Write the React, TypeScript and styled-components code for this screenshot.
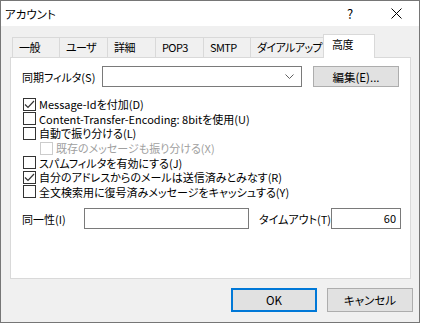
import styled, { createGlobalStyle } from 'styled-components';

const GlobalStyle = createGlobalStyle`
  html, body {
    margin: 0;
    padding: 0;
    background: #ffffff;
  }
  * {
    box-sizing: border-box;
  }
`;

const Window = styled.div`
  width: 420px;
  height: 323px;
  border: 1px solid #767676;
  background: #f0f0f0;
  display: flex;
  flex-direction: column;
  font-family: "Noto Sans CJK JP", "Noto Sans", sans-serif;
  font-feature-settings: "palt";
  font-size: 11px;
  line-height: 14px;
  color: #000;
`;

const TitleBar = styled.div`
  height: 25px;
  background: #fff;
  display: flex;
  align-items: center;
  padding-left: 4px;
`;

const Title = styled.div`
  flex: 1;
  font-size: 11.5px;
`;

const TitleButton = styled.div`
  width: 46px;
  height: 25px;
  display: flex;
  align-items: center;
  justify-content: center;
  font-size: 13px;
`;

const Body = styled.div`
  flex: 1;
  display: flex;
  flex-direction: column;
  padding: 8px 6px 0 9px;
`;

const TabStrip = styled.div`
  display: flex;
  align-items: flex-end;
  height: 23px;
  padding-left: 2px;
  position: relative;
  z-index: 1;
`;

const Tab = styled.div<{ $w: number; $active?: boolean }>`
  width: ${({ $w, $active }) => ($active ? $w + 4 : $w)}px;
  height: ${({ $active }) => ($active ? 24 : 20)}px;
  margin: ${({ $active }) => ($active ? '0 -3px -1px -2px' : '0 -1px 0 0')};
  padding-left: ${({ $active }) => ($active ? 8 : 6)}px;
  padding-top: 2px;
  background: ${({ $active }) => ($active ? '#fff' : '#f0f0f0')};
  border: 1px solid #d9d9d9;
  border-bottom: none;
  position: relative;
  z-index: ${({ $active }) => ($active ? 2 : 0)};
  font-size: 11px;
  letter-spacing: -0.6px;
  white-space: nowrap;
  overflow: hidden;
`;

const Panel = styled.div`
  width: 401px;
  height: 222px;
  background: #fff;
  border: 1px solid #d9d9d9;
  padding: 8px 0 0 11px;
  display: flex;
  flex-direction: column;
`;

const FieldRow = styled.div<{ $top?: number }>`
  display: flex;
  align-items: center;
  height: 21px;
  padding-right: 11px;
  margin-top: ${({ $top }) => $top ?? 0}px;
`;

const Label = styled.div<{ $w?: number; $pad?: number }>`
  width: ${({ $w }) => ($w ? `${$w}px` : 'auto')};
  flex: ${({ $w }) => ($w ? 'none' : '1')};
  padding-left: ${({ $pad }) => $pad ?? 0}px;
  white-space: nowrap;
`;

const Combo = styled.div`
  width: 200px;
  height: 21px;
  border: 1px solid #7a7a7a;
  background: #fff;
  display: flex;
  align-items: center;
  justify-content: flex-end;
  padding-right: 7px;
  margin-right: 11px;
`;

const Button = styled.div<{ $w: number; $h?: number; $default?: boolean }>`
  width: ${({ $w }) => $w}px;
  height: ${({ $h }) => $h ?? 21}px;
  background: #e1e1e1;
  border: ${({ $default }) => ($default ? '2px solid #0078d7' : '1px solid #adadad')};
  display: flex;
  align-items: center;
  justify-content: center;
  white-space: nowrap;
  font-size: 11.5px;
`;

const TextBox = styled.div<{ $w: number }>`
  flex: none;
  width: ${({ $w }) => $w}px;
  height: 21px;
  border: 1px solid #7a7a7a;
  background: #fff;
  text-align: right;
  padding: 2px 4px 0 0;
`;

const CheckList = styled.div`
  display: flex;
  flex-direction: column;
  margin-top: 10px;
  padding-left: 1px;
`;

const CheckRow = styled.div<{ $indent?: boolean; $disabled?: boolean }>`
  display: flex;
  align-items: center;
  gap: 3px;
  height: 14.6px;
  padding-left: ${({ $indent }) => ($indent ? 17 : 0)}px;
  color: ${({ $disabled }) => ($disabled ? '#a0a0a0' : '#000')};
  white-space: nowrap;
`;

const Box = styled.div<{ $disabled?: boolean }>`
  flex: none;
  width: 13px;
  height: 13px;
  border: 1px solid ${({ $disabled }) => ($disabled ? '#cccccc' : '#333333')};
  background: #fff;
  display: flex;
  align-items: center;
  justify-content: center;
`;

const Footer = styled.div`
  display: flex;
  justify-content: flex-end;
  gap: 10px;
  padding-top: 9px;
`;

const Check = () => (
  <svg width="11" height="11" viewBox="0 0 11 11">
    <polyline points="1,5.5 4,8.5 10,2" fill="none" stroke="#333" strokeWidth="1.2" />
  </svg>
);

const Chevron = () => (
  <svg width="9" height="5" viewBox="0 0 9 5">
    <polyline points="0.5,0.5 4.5,4.5 8.5,0.5" fill="none" stroke="#606060" strokeWidth="1" />
  </svg>
);

const CloseIcon = () => (
  <svg width="11" height="11" viewBox="0 0 11 11">
    <path d="M0.5 0.5 L10.5 10.5 M10.5 0.5 L0.5 10.5" stroke="#000" strokeWidth="1" />
  </svg>
);

const tabs = [
  { name: '一般', w: 48 },
  { name: 'ユーザ', w: 49 },
  { name: '詳細', w: 49 },
  { name: 'POP3', w: 49 },
  { name: 'SMTP', w: 48 },
  { name: 'ダイアルアップ', w: 76 },
  { name: '高度', w: 48, active: true },
];

const options = [
  { label: 'Message-Idを付加(D)', checked: true },
  { label: 'Content-Transfer-Encoding: 8bitを使用(U)' },
  { label: '自動で振り分ける(L)' },
  { label: '既存のメッセージも振り分ける(X)', indent: true, disabled: true },
  { label: 'スパムフィルタを有効にする(J)' },
  { label: '自分のアドレスからのメールは送信済みとみなす(R)', checked: true },
  { label: '全文検索用に復号済みメッセージをキャッシュする(Y)' },
];

export default function App() {
  return (
    <>
      <GlobalStyle />
      <Window>
        <TitleBar>
          <Title>アカウント</Title>
          <TitleButton>?</TitleButton>
          <TitleButton>
            <CloseIcon />
          </TitleButton>
        </TitleBar>
        <Body>
          <TabStrip>
            {tabs.map((t) => (
              <Tab key={t.name} $w={t.w} $active={t.active}>
                {t.name}
              </Tab>
            ))}
          </TabStrip>
          <Panel>
            <FieldRow>
              <Label $w={80}>同期フィルタ(S)</Label>
              <Combo>
                <Chevron />
              </Combo>
              <Button $w={86}>編集(E)...</Button>
            </FieldRow>
            <CheckList>
              {options.map((o) => (
                <CheckRow key={o.label} $indent={o.indent} $disabled={o.disabled}>
                  <Box $disabled={o.disabled}>{o.checked && <Check />}</Box>
                  <span>{o.label}</span>
                </CheckRow>
              ))}
            </CheckList>
            <FieldRow $top={9}>
              <Label $w={62}>同一性(I)</Label>
              <TextBox $w={165} />
              <Label $pad={10}>タイムアウト(T)</Label>
              <TextBox $w={70}>60</TextBox>
            </FieldRow>
          </Panel>
          <Footer>
            <Button $w={86} $h={24} $default>OK</Button>
            <Button $w={86} $h={24}>キャンセル</Button>
          </Footer>
        </Body>
      </Window>
    </>
  );
}
